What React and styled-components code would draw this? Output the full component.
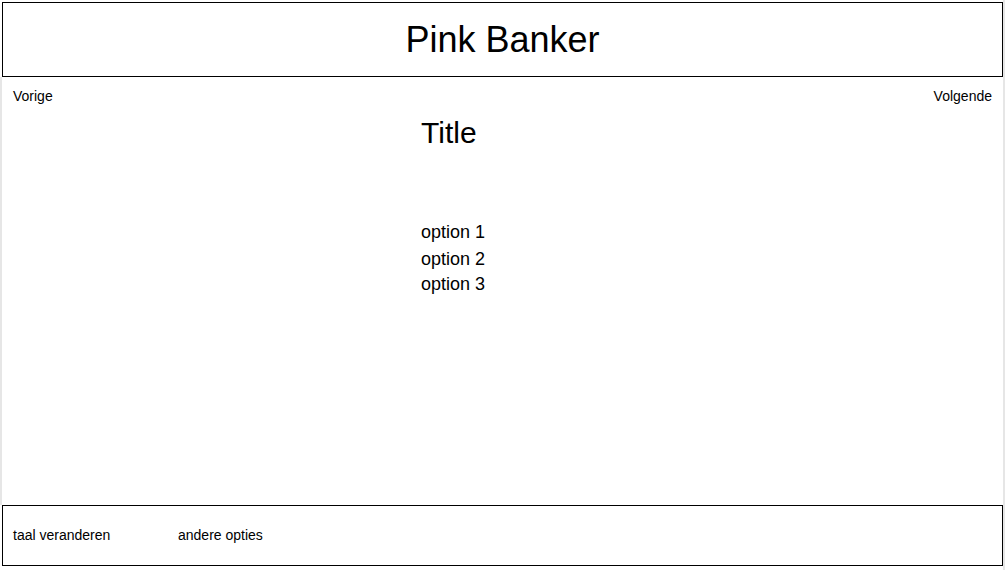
import React from "react";
import styled, { createGlobalStyle } from "styled-components";

const Global = createGlobalStyle`
  html, body { margin: 0; padding: 0; background: #fff; }
  body { font-family: "Liberation Sans", Arial, sans-serif; color: #000; }
`;

const Page = styled.div`
  box-sizing: border-box;
  width: 1005px;
  height: 570px;
  border-right: 2px solid #e6e6e6;
  display: flex;
  flex-direction: column;
`;

const Header = styled.header`
  box-sizing: border-box;
  margin: 2px 0 0 2px;
  width: 1001px;
  height: 75px;
  border: 1px solid #000;
  display: flex;
  align-items: center;
  justify-content: center;
`;

const Brand = styled.h1`
  margin: 0;
  font-weight: normal;
  font-size: 36px;
  line-height: 40px;
`;

const Main = styled.main`
  flex: 1;
  border-left: 2px solid #e6e6e6;
  display: flex;
  flex-direction: column;
  padding-top: 11px;
`;

const NavRow = styled.nav`
  display: flex;
  justify-content: space-between;
  padding: 0 11px 0 11px;
`;

const NavLink = styled.span`
  font-size: 14px;
  line-height: 16px;
`;

const Content = styled.section`
  margin-left: 419px;
  display: flex;
  flex-direction: column;
`;

const Title = styled.h2`
  margin: 12px 0 0 0;
  font-weight: normal;
  font-size: 30px;
  line-height: 34px;
`;

const Options = styled.ul`
  list-style: none;
  margin: 72px 0 0 0;
  padding: 0;
`;

const Option = styled.li`
  font-size: 18px;
  line-height: 21px;
  margin-bottom: ${(p) => (p.$first ? "6px" : "4px")};
`;

const Footer = styled.footer`
  box-sizing: border-box;
  margin: 0 0 4px 2px;
  width: 1001px;
  height: 61px;
  border: 1px solid #000;
  display: flex;
  align-items: center;
  padding: 0 0 2px 10px;
`;

const FooterItem = styled.span`
  font-size: 14px;
  line-height: 16px;
  min-width: 165px;
`;

export default function App() {
  return (
    <>
      <Global />
      <Page>
        <Header>
          <Brand>Pink Banker</Brand>
        </Header>
        <Main>
          <NavRow>
            <NavLink>Vorige</NavLink>
            <NavLink>Volgende</NavLink>
          </NavRow>
          <Content>
            <Title>Title</Title>
            <Options>
              <Option $first>option 1</Option>
              <Option>option 2</Option>
              <Option>option 3</Option>
            </Options>
          </Content>
        </Main>
        <Footer>
          <FooterItem>taal veranderen</FooterItem>
          <FooterItem>andere opties</FooterItem>
        </Footer>
      </Page>
    </>
  );
}
